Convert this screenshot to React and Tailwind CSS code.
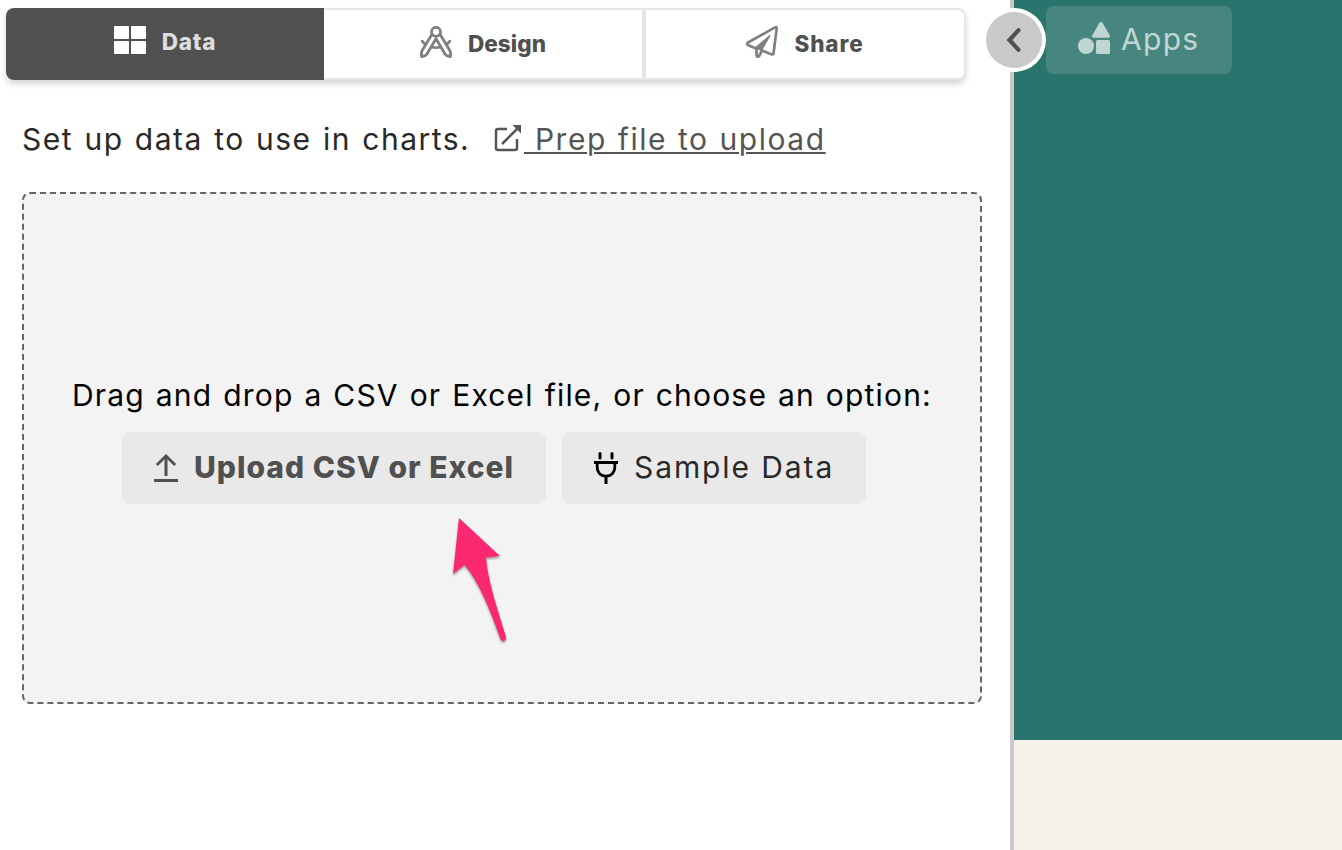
function GridIcon() {
  return (
    <svg className="h-8 w-8 shrink-0" viewBox="0 0 32 32" fill="#fff">
      <rect x="0" y="0" width="15" height="13" rx="0.8" />
      <rect x="17" y="0" width="15" height="13" rx="0.8" />
      <rect x="0" y="15" width="15" height="13" rx="0.8" />
      <rect x="17" y="15" width="15" height="13" rx="0.8" />
    </svg>
  );
}

function CompassIcon() {
  return (
    <svg className="h-8 w-8 shrink-0" viewBox="0 0 32 32" fill="none" stroke="#808080" strokeWidth="2.8" strokeLinecap="round" strokeLinejoin="round">
      <circle cx="16" cy="5.800" r="4.500" />
      <path d="M11.500 9 2.300 24.300c-1 1.700-.9 4.200-.8 6.200 2.300 0 4-.3 5.300-2.200L16 12.800l9.200 15.500c1.300 1.900 3 2.200 5.300 2.200.1-2 .2-4.500-.8-6.200L20.500 9" />
      <path d="M2.200 15.200c.9 1.200 2 2.200 3.200 3.100M11.500 21c3 .9 6 .9 9 0M26.600 18.300c1.200-.9 2.300-1.900 3.200-3.100" />
    </svg>
  );
}

function PlaneIcon() {
  return (
    <svg className="h-8 w-8 shrink-0" viewBox="0 0 32 32" fill="none" stroke="#808080" strokeWidth="2.700" strokeLinejoin="round" strokeLinecap="round">
      <path d="M1.700 16.700 29 1.400c1-.5 1.800 0 1.700 1L27.500 27.500c-.1.900-.8 1.200-1.600.9L16 24.500M10 22.500l-8.200-3.500c-1-.6-1-1.700-.1-2.300" />
      <path d="M10.500 22.500v6.300c0 2 1.600 2.600 2.700 1.100L16 24.500" strokeWidth="2.800" />
      <path d="M24 9.500 9.500 21.800l6 2.700z" fill="#808080" strokeWidth="1.200" />
    </svg>
  );
}

function Tab({ icon, label, className }) {
  return (
    <button className={"flex h-[72px] items-center justify-center gap-4 text-[22.500px] leading-8 font-extrabold " + className}>
      {icon}
      {label}
    </button>
  );
}

function Panel() {
  return (
    <main className="h-full w-[1014px] shrink-0 border-r-4 border-[#c9c9c9] bg-white">
      <nav className="mt-2 ml-1.5 flex w-[960px] rounded-lg shadow-[0_4px_6px_rgba(0,0,0,0.16)]">
        <Tab
          icon={<GridIcon />}
          label={<span className="tracking-[0.800px]">Data</span>}
          className="w-[318px] rounded-l-lg bg-[#505050] pb-1 text-[#dedede]"
        />
        <Tab
          icon={<CompassIcon />}
          label={<span className="pt-1 tracking-[0.050px]">Design</span>}
          className="w-[320px] border-y-2 border-r-2 border-[#e6e6e6] bg-white pb-1 text-[#505050]"
        />
        <Tab
          icon={<PlaneIcon />}
          label={<span className="pt-1 tracking-[0.900px]">Share</span>}
          className="w-[322px] rounded-r-lg border-2 border-[#e6e6e6] bg-white pb-1 text-[#505050]"
        />
      </nav>
      <div className="mt-[35px] flex h-12 items-center pl-[22px] text-[30px] whitespace-nowrap text-[#292929]">
        <p className="w-[472px] tracking-[1.500px] [word-spacing:1.400px]">Set up data to use in charts.</p>
        <a href="#" className="flex items-center text-[#555]">
          <svg className="h-[30px] w-[30px]" viewBox="0 0 30 30" fill="none" stroke="#555" strokeWidth="2.500">
            <path d="M13 5H4a2 2 0 0 0-2 2v17a2 2 0 0 0 2 2h17a2 2 0 0 0 2-2V15" />
            <path d="M8 20 25 3" />
            <path d="M18.500 1h8.500v8.500z" fill="#555" stroke="none" />
          </svg>
          <span className="tracking-[1.550px] whitespace-pre underline decoration-2 underline-offset-[2px] [word-spacing:0.900px]"> Prep file to upload</span>
        </a>
      </div>
      <section className="mt-[29px] ml-[22px] h-[512px] w-[960px] rounded-lg border-2 border-dashed border-[#666] bg-[#f3f3f3] pt-[177px]">
        <p className="pl-12 text-[30px] leading-12 tracking-[1.180px] whitespace-nowrap text-black [word-spacing:1.300px]">
          Drag and drop a CSV or Excel file, or choose an option:
        </p>
        <div className="mt-[13px] flex gap-4 pl-[98px] text-[30px] whitespace-nowrap">
          <button className="flex h-[72px] w-[424px] items-center rounded-lg bg-[#e9e9e9] pl-8 font-extrabold text-[#505050]">
            <svg className="mr-4 h-8 w-6" viewBox="0 0 24 32" fill="none" stroke="#505050" strokeWidth="3">
              <path d="M12 24V4" />
              <path d="M2.800 13 12 4l9.200 9" strokeWidth="2.800" />
              <path d="M0 28.500h24" />
            </svg>
            <span className="pb-0.5 tracking-[1px]">Upload CSV or Excel</span>
          </button>
          <button className="flex h-[72px] w-[304px] items-center rounded-lg bg-[#e9e9e9] pl-8 text-[#292929]">
            <svg className="mr-4 h-8 w-6" viewBox="0 0 24 32" fill="none" stroke="#000" strokeWidth="3">
              <path d="M6 6V1.500M18 6V1.500" strokeLinecap="round" />
              <path d="M0 10.500h24M12 24v8" />
              <path d="M3.200 11v4.500c0 5 3.500 8.700 8.800 8.700s8.800-3.700 8.800-8.700V11" strokeWidth="2.800" />
            </svg>
            <span className="pb-0.5 tracking-[1.900px]">Sample Data</span>
          </button>
        </div>
      </section>
    </main>
  );
}

export default function App() {
  return (
    <div className="relative flex h-[850px] w-[1342px] overflow-hidden bg-white font-['Inter',sans-serif]">
      <Panel />
      <aside className="flex flex-1 flex-col bg-[#f5f2ea]">
        <div className="h-[740px] bg-[#29756d] pt-1.5 pl-8">
          <button className="flex h-[68px] w-[186px] items-center rounded-lg bg-[#47867f] pl-8 text-[30px] text-[#c1d5d2]">
            <svg className="mr-[11px] mb-1 h-8 w-8" viewBox="0 0 32 32" fill="#c1d5d2">
              <path d="M21.200 1.200c.8-1.500 2.800-1.500 3.600 0l6.900 12c.7 1.300 0 2.600-1.400 2.600H15.700c-1.400 0-2.100-1.300-1.400-2.600z" />
              <circle cx="8" cy="24" r="8" />
              <rect x="18" y="18" width="14" height="14" rx="1.500" />
            </svg>
            <span className="pb-0.5 tracking-[1.300px]">Apps</span>
          </button>
        </div>
      </aside>
      <button className="absolute top-2 left-[982px] h-16 w-16 rounded-full bg-white p-1">
        <span className="flex h-14 w-14 items-center justify-center rounded-full bg-[#c9c9c9]">
          <svg className="h-6 w-4" viewBox="0 0 16 24" fill="none" stroke="#505050" strokeWidth="4.200" strokeLinecap="round" strokeLinejoin="miter">
            <path d="M12.500 2.200 3.500 12l9 9.800" />
          </svg>
        </span>
      </button>
      <svg className="absolute top-[508px] left-[442px] h-36 w-20 drop-shadow-[0_2px_1px_rgba(0,0,0,0.35)]" viewBox="442 508 80 144" fill="#fa2870">
        <path d="M459 518 500 556 486 557.500C488 583 499 613 506 637c.5 4-3.500 5.500-5.500 2C492 615 479 581 464.500 565L453 574z" />
      </svg>
    </div>
  );
}
